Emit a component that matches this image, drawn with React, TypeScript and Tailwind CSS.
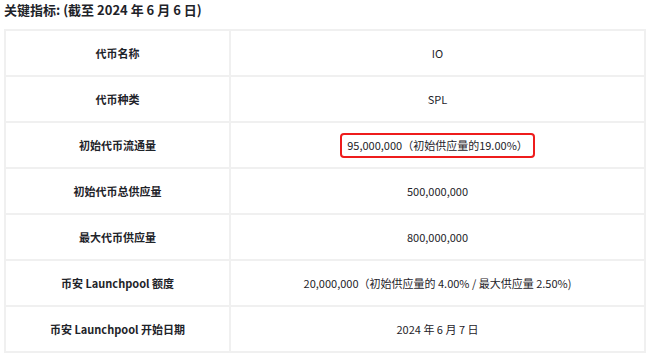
const rows: { label: string; value: string; highlight?: boolean }[] = [
    { label: "代币名称", value: "IO" },
    { label: "代币种类", value: "SPL" },
    { label: "初始代币流通量", value: "95,000,000（初始供应量的19.00%）", highlight: true },
    { label: "初始代币总供应量", value: "500,000,000" },
    { label: "最大代币供应量", value: "800,000,000" },
    { label: "币安 Launchpool 额度", value: "20,000,000（初始供应量的 4.00% / 最大供应量 2.50%)" },
    { label: "币安 Launchpool 开始日期", value: "2024 年 6 月 7 日" },
];

function App() {
    return (
        <div
            className="w-[650px] h-[358px] bg-white px-[4px] text-[#1e2329] overflow-hidden"
            style={{ fontFamily: '"Noto Sans CJK SC", "Noto Sans", sans-serif' }}
        >
            <h1 className="text-[13px] font-bold leading-[20px] h-[20px] mb-[9px]">
                关键指标: (截至 2024 年 6 月 6 日)
            </h1>
            <table className="w-[642px] border-collapse text-[11px]">
                <tbody>
                {rows.map((row) => (
                    <tr key={row.label} className="h-[46px]">
                        <td className="w-[225px] border-2 border-[#f0f0f0] text-center font-semibold">
                            {row.label}
                        </td>
                        <td className="border-2 border-[#f0f0f0] text-center">
                            {row.highlight ? (
                                <span className="inline-block whitespace-nowrap border-2 border-[#ee1c1c] rounded-[4px] px-[5px] h-[25px] leading-[21px]">
                                    {row.value}
                                </span>
                            ) : (
                                row.value
                            )}
                        </td>
                    </tr>
                ))}
                </tbody>
            </table>
        </div>
    )
}

export default App
